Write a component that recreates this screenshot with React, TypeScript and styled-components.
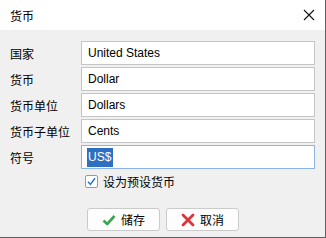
import React from "react";
import styled, { createGlobalStyle } from "styled-components";

const Global = createGlobalStyle`
  html, body { margin: 0; padding: 0; background: #6e6e6e; }
  body { font-family: "Liberation Sans", "Noto Sans CJK SC", sans-serif; }
`;

const Window = styled.div`
  width: 325px;
  height: 237px;
  background: #f0f0f0;
  border-right: 1px solid #5f5f5f;
  border-bottom: 1px solid #5f5f5f;
  display: flex;
  flex-direction: column;
  overflow: hidden;
`;

const TitleBar = styled.div`
  height: 30px;
  background: #ffffff;
  display: flex;
  align-items: center;
  justify-content: space-between;
  padding: 0 9px 0 10px;
  box-sizing: border-box;
  flex-shrink: 0;
`;

const Title = styled.span`
  font-family: "Noto Sans CJK SC", sans-serif;
  font-size: 12px;
  color: #000;
`;

const CloseIcon = styled.svg`
  width: 12px;
  height: 12px;
  display: block;
  margin-right: 1px;
`;

const Body = styled.div`
  padding: 11px 10px 0 10px;
  display: flex;
  flex-direction: column;
`;

const Form = styled.div`
  display: grid;
  grid-template-columns: 71px 234px;
  grid-auto-rows: 24px;
  row-gap: 2px;
`;

const Label = styled.div`
  font-family: "Noto Sans CJK SC", sans-serif;
  font-size: 12px;
  color: #000;
  display: flex;
  align-items: center;
`;

const Field = styled.div<{ $focused?: boolean }>`
  box-sizing: border-box;
  border: 1px solid ${(p) => (p.$focused ? "#8db4e4" : "#c5c5c5")};
  background: #fff;
  display: flex;
  align-items: center;
  padding-left: 6px;
  font-family: "Liberation Sans", "Noto Sans CJK SC", sans-serif;
  font-size: 12px;
  color: #000;
`;

const Selected = styled.span`
  display: inline-block;
  height: 19px;
  line-height: 19px;
  background: #2f6fc1;
  color: #fff;
  padding: 0 2px 0 1px;
  margin-left: -1px;
`;

const CheckRow = styled.label`
  display: flex;
  align-items: center;
  gap: 5px;
  margin: 6px 0 0 75px;
  height: 13px;
  font-family: "Noto Sans CJK SC", sans-serif;
  font-size: 12px;
  color: #000;
`;

const CheckBox = styled.svg`
  width: 13px;
  height: 13px;
  display: block;
`;

const ButtonRow = styled.div`
  display: flex;
  gap: 6px;
  margin: 20px 0 0 77px;
`;

const Button = styled.button`
  box-sizing: border-box;
  width: 73px;
  height: 23px;
  background: #fdfdfd;
  border: 1px solid #cbcbcb;
  border-radius: 3px;
  display: flex;
  align-items: center;
  justify-content: center;
  gap: 5px;
  padding: 0;
  font-family: "Noto Sans CJK SC", sans-serif;
  font-size: 12px;
  color: #000;
`;

const BtnIcon = styled.svg`
  width: 14px;
  height: 14px;
  display: block;
`;

const rows: { label: string; value: string; focused?: boolean }[] = [
  { label: "国家", value: "United States" },
  { label: "货币", value: "Dollar" },
  { label: "货币单位", value: "Dollars" },
  { label: "货币子单位", value: "Cents" },
  { label: "符号", value: "US$", focused: true },
];

export default function App() {
  return (
    <>
      <Global />
      <Window>
        <TitleBar>
          <Title>货币</Title>
          <CloseIcon viewBox="0 0 12 12">
            <path d="M1 1 L11 11 M11 1 L1 11" stroke="#111" strokeWidth="1.1" fill="none" />
          </CloseIcon>
        </TitleBar>
        <Body>
          <Form>
            {rows.map((r) => (
              <React.Fragment key={r.label}>
                <Label>{r.label}</Label>
                <Field $focused={r.focused}>
                  {r.focused ? <Selected>{r.value}</Selected> : r.value}
                </Field>
              </React.Fragment>
            ))}
          </Form>
          <CheckRow>
            <CheckBox viewBox="0 0 13 13">
              <rect x="0.5" y="0.5" width="12" height="12" rx="1.5" fill="#fff" stroke="#9a9a9a" />
              <path d="M3 6.8 L5.4 9.4 L10 3.2" stroke="#2f74d0" strokeWidth="1.5" fill="none" />
            </CheckBox>
            设为预设货币
          </CheckRow>
          <ButtonRow>
            <Button>
              <BtnIcon viewBox="0 0 14 14">
                <path d="M1.5 7.5 L5.2 11 L12.5 3" stroke="#3aa84a" strokeWidth="2.6" fill="none" strokeLinejoin="round" />
              </BtnIcon>
              储存
            </Button>
            <Button>
              <BtnIcon viewBox="0 0 14 14">
                <path d="M2 2 L12 12 M12 2 L2 12" stroke="#e0323a" strokeWidth="2.8" fill="none" strokeLinecap="round" />
              </BtnIcon>
              取消
            </Button>
          </ButtonRow>
        </Body>
      </Window>
    </>
  );
}
